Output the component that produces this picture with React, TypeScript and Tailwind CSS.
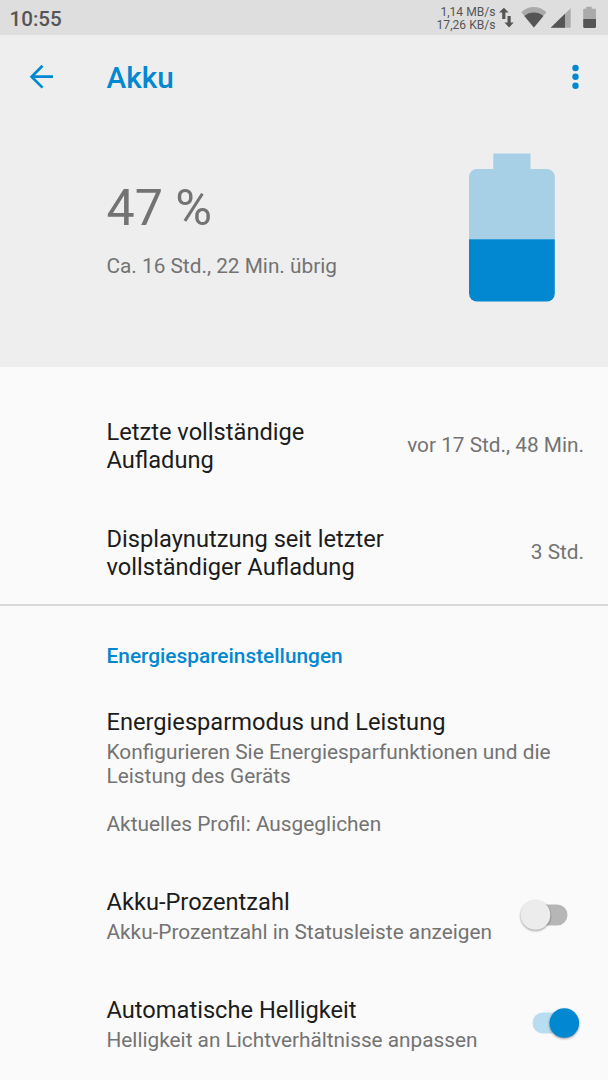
import React, { useState } from 'react';

interface InfoRowProps {
  title: string;
  value: string;
}

interface SwitchRowProps {
  title: string;
  summary: string;
  checked: boolean;
  onToggle: () => void;
}

const StatusBar: React.FC = () => (
  <div className="flex h-[35px] items-center justify-between bg-[#dedede] pl-[9.5px] pr-[13.5px] text-[#555]">
    <span className="pt-[2px] text-[20.6px] font-medium leading-6">10:55</span>
    <div className="flex h-full items-center">
      <div className="mr-[3px] pt-[3px] text-right text-[12.1px] leading-[13.5px]">
        <p>1,14 MB/s</p>
        <p>17,26 KB/s</p>
      </div>
      <svg width="96" height="35" viewBox="0 0 96 35" fill="#555" className="overflow-visible">
        <path d="M4.9 7.7L0 12.6h3.2v6.4h3.2v-6.4h3.2zM10.1 27.5L5.5 22.6h3V16h3.2v6.6h3z" />
        <path d="M22.3 12.2C29.2 5.3 40.5 5.3 47.4 12.2L34.9 27.6z" fill="#aaa" />
        <path d="M25.4 15.9c5.2-4.5 13.8-4.5 19 0L34.9 27.6z" />
        <path d="M71.7 8.3v19.5H51.7z" fill="#aaa" />
        <path d="M66 13.8v14H51.7z" />
        <path d="M87.2 6.7h5.6v2h3c.8 0 1.2.4 1.2 1.2V19H84.2V9.9c0-.8.4-1.2 1.2-1.2h1.8z" fill="#aaa" />
        <path d="M84.2 19H97v7.8c0 .7-.4 1.2-1.2 1.2H85.4c-.8 0-1.2-.5-1.2-1.2z" />
      </svg>
    </div>
  </div>
);

const Toolbar: React.FC = () => (
  <div className="flex h-[86px] items-center pl-[29px] pr-[28px] text-[#0288d1]">
    <button type="button" aria-label="Zurück" className="w-[77.5px] pb-[2px]">
      <svg width="26" height="26" viewBox="0 0 26 26" fill="none" stroke="currentColor" strokeWidth="2.7">
        <path d="M24 12.7H2.7M13.5 1.8L2.6 12.7l10.9 10.9" />
      </svg>
    </button>
    <h1 className="flex-1 text-[29.7px] font-medium leading-[34px]">Akku</h1>
    <button type="button" aria-label="Mehr" className="pb-[2px]">
      <svg width="9" height="26" viewBox="0 0 9 26" fill="currentColor">
        <circle cx="4.5" cy="4" r="3.2" />
        <circle cx="4.5" cy="12.8" r="3.2" />
        <circle cx="4.5" cy="21.7" r="3.2" />
      </svg>
    </button>
  </div>
);

const BatteryIcon: React.FC = () => (
  <svg width="86" height="149" viewBox="0 -0.5 86 149">
    <path d="M24.3 0H61.5V15.5H77.8a8 8 0 0 1 8 8V86H0V23.5a8 8 0 0 1 8-8H24.3z" fill="#a7cfe5" />
    <path d="M0 85.7H85.8V140a8 8 0 0 1-8 8H8a8 8 0 0 1-8-8z" fill="#0288d1" />
  </svg>
);

const InfoRow: React.FC<InfoRowProps> = ({ title, value }) => (
  <div className="flex h-[107px] items-center justify-between">
    <p className="w-[290px] pt-[2px] text-[23.65px] leading-[27.4px] text-[#1c1c1c]">{title}</p>
    <p className="pb-[2px] text-[20.8px] leading-6 text-[#737373]">{value}</p>
  </div>
);

const SwitchRow: React.FC<SwitchRowProps> = ({ title, summary, checked, onToggle }) => (
  <div className="flex h-[108px] items-center justify-between">
    <div className="pt-[4.5px]">
      <p className="text-[23.65px] leading-[27.6px] text-[#1c1c1c]">{title}</p>
      <p className="mt-[3.5px] whitespace-nowrap text-[20.8px] leading-[24.2px] text-[#737373]">{summary}</p>
    </div>
    <button type="button" role="switch" aria-checked={checked} aria-label={title} onClick={onToggle}>
      <svg width="68" height="40" viewBox="0 0 68 40" className="overflow-visible">
        <rect x="16.5" y="9.5" width="35" height="21" rx="10.5" fill={checked ? '#b8dcf0' : '#b6b6b6'} />
        <circle
          cx={checked ? 48.3 : 19.5}
          cy="20"
          r="14.8"
          fill={checked ? '#0288d1' : '#ececec'}
          className="drop-shadow-[0_1px_1px_rgba(0,0,0,0.4)]"
        />
      </svg>
    </button>
  </div>
);

const App: React.FC = () => {
  const [showPercent, setShowPercent] = useState(false);
  const [autoBrightness, setAutoBrightness] = useState(true);

  return (
    <div className="h-[1080px] w-[608px] overflow-hidden bg-[#fafafa] font-['Roboto',sans-serif]">
      <StatusBar />

      <header className="h-[332px] bg-[#eeeeee]">
        <Toolbar />
        <div className="flex items-start justify-between pl-[106.5px] pr-[53px] pt-[32px] text-[#737373]">
          <div className="pt-[25px]">
            <p className="text-[50.2px] leading-[60px]">47 %</p>
            <p className="mt-[16px] text-[20.8px] leading-6">Ca. 16 Std., 22 Min. übrig</p>
          </div>
          <BatteryIcon />
        </div>
      </header>

      <section className="h-[239px] border-b-2 border-[#dadada] pl-[106.5px] pr-[24px] pt-[25px]">
        <InfoRow title="Letzte vollständige Aufladung" value="vor 17 Std., 48 Min." />
        <InfoRow title="Displaynutzung seit letzter vollständiger Aufladung" value="3 Std." />
      </section>

      <section className="pl-[106.5px] pr-[24px] pt-[38px]">
        <h2 className="text-[20.85px] font-medium leading-[24.2px] text-[#0288d1]">Energiespareinstellungen</h2>
        <div className="mt-[40.5px]">
          <p className="text-[23.65px] leading-[27.6px] text-[#1c1c1c]">Energiesparmodus und Leistung</p>
          <div className="mt-[3.5px] text-[20.85px] leading-[24.2px] text-[#737373]">
            <p className="mb-[24.2px]">Konfigurieren Sie Energiesparfunktionen und die Leistung des Geräts</p>
            <p>Aktuelles Profil: Ausgeglichen</p>
          </div>
        </div>
        <div className="mt-[24px]">
          <SwitchRow
            title="Akku-Prozentzahl"
            summary="Akku-Prozentzahl in Statusleiste anzeigen"
            checked={showPercent}
            onToggle={() => setShowPercent(!showPercent)}
          />
          <SwitchRow
            title="Automatische Helligkeit"
            summary="Helligkeit an Lichtverhältnisse anpassen"
            checked={autoBrightness}
            onToggle={() => setAutoBrightness(!autoBrightness)}
          />
        </div>
      </section>
    </div>
  );
};

export default App;
